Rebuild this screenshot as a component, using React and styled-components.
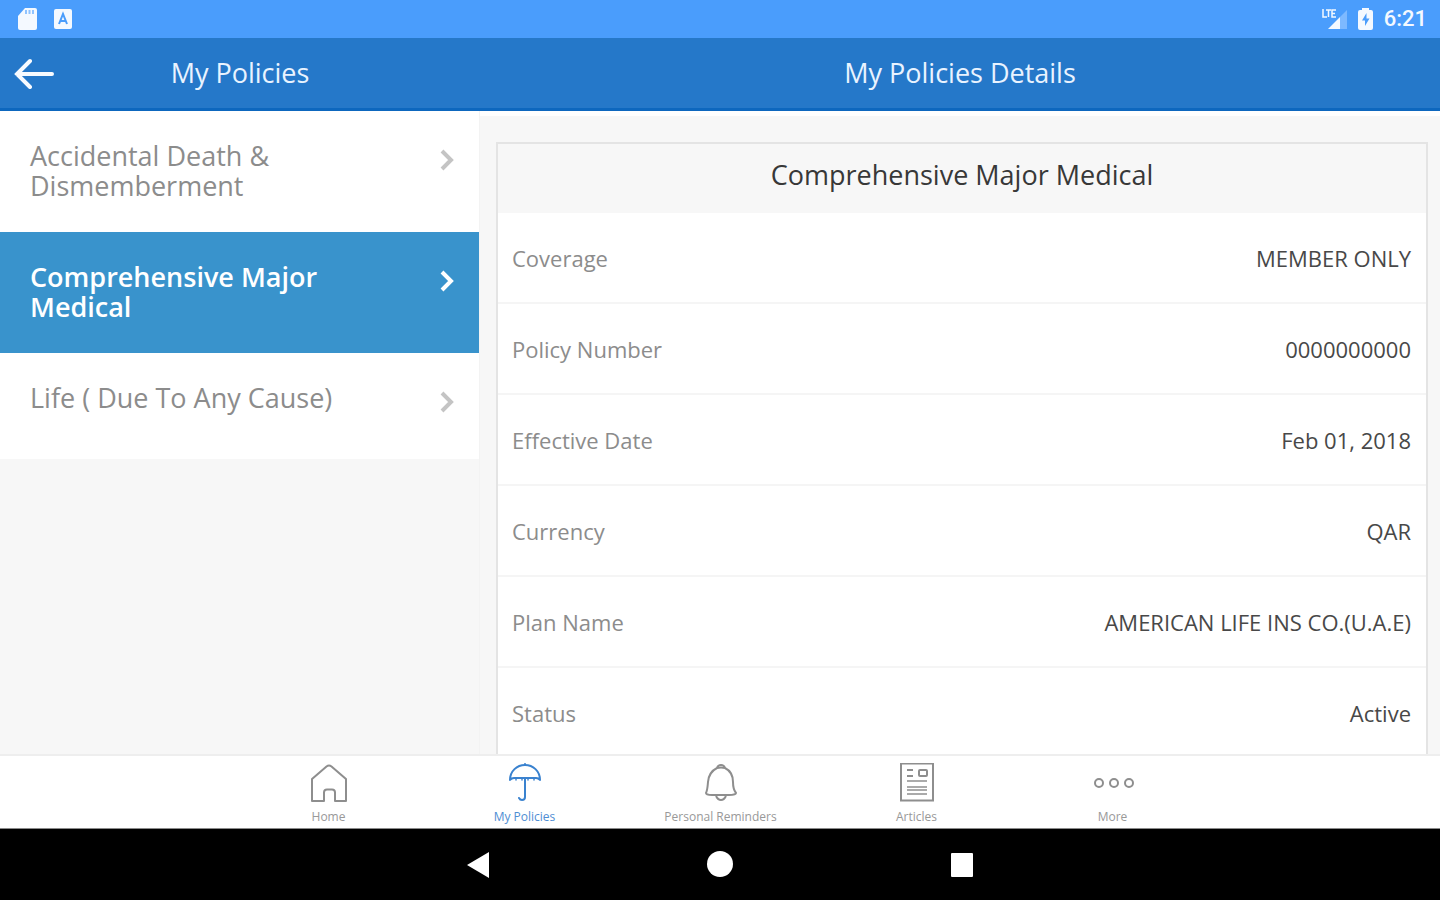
import React, { useState } from "react";
import styled, { createGlobalStyle } from "styled-components";

const GlobalStyle = createGlobalStyle`
  * {
    box-sizing: border-box;
  }
  body {
    margin: 0;
    font-family: "Open Sans", "Noto Sans", sans-serif;
    background: #f7f7f7;
  }
  button {
    font: inherit;
    border: 0;
    padding: 0;
    background: none;
    cursor: pointer;
  }
`;

const Screen = styled.div`
  display: flex;
  flex-direction: column;
  height: 100vh;
`;

const StatusBar = styled.div`
  display: flex;
  flex-shrink: 0;
  align-items: center;
  justify-content: space-between;
  height: 38px;
  padding: 0 13px 0 18px;
  background: #4a9dfc;
  color: #f4f9ff;
`;
const StatusGroup = styled.div`
  display: flex;
  align-items: center;
  gap: ${props => props.gap};
`;
const Clock = styled.span`
  font-family: Roboto, sans-serif;
  font-size: 22px;
  font-weight: 500;
  line-height: 38px;
`;

const Header = styled.header`
  display: grid;
  flex-shrink: 0;
  grid-template-columns: 1fr 2fr;
  height: 73px;
  background: #2578c9;
  border-bottom: 3px solid #0d67be;
  color: #e9f3ff;
`;
const HeaderPane = styled.div`
  display: flex;
  align-items: center;
`;
const BackButton = styled.button`
  display: flex;
  width: 70px;
  padding-left: 14px;
  color: #f8fbff;
`;
const HeaderTitle = styled.h1`
  flex: 1;
  margin: 0;
  padding-right: ${props => props.offset || 0};
  font-size: 27px;
  font-weight: 400;
  line-height: 36px;
  text-align: center;
`;

const Content = styled.main`
  display: grid;
  flex: 1;
  grid-template-columns: 1fr 2fr;
  min-height: 0;
  overflow: hidden;
`;
const Sidebar = styled.nav`
  display: flex;
  flex-direction: column;
  border-right: 1px solid #f3f3f3;
`;
const PolicyItem = styled.button`
  display: flex;
  align-items: flex-start;
  justify-content: space-between;
  min-height: 106px;
  padding: 30px 24px 31px 30px;
  background: ${props => props.$active ? '#3993cc' : '#ffffff'};
  color: ${props => props.$active ? '#ffffff' : '#8c8c8c'};
  font-size: 27px;
  font-weight: ${props => props.$active ? 600 : 400};
  line-height: 30px;
  text-align: left;
  svg {
    flex-shrink: 0;
    margin-top: 8px;
    color: ${props => props.$active ? '#ffffff' : '#c4c4c4'};
  }
`;
const PolicyName = styled.span`
  max-width: 320px;
`;

const Details = styled.section`
  padding: 26px 12px 0 16px;
  overflow: hidden;
  border-top: 5px solid #ffffff;
`;
const Card = styled.table`
  width: 100%;
  border: 2px solid #e4e4e4;
  border-spacing: 0;
  background: #ffffff;
`;
const CardTitle = styled.caption`
  height: 71px;
  border: 2px solid #e4e4e4;
  border-bottom: 0;
  background: #f7f7f7;
  color: #383838;
  font-size: 27px;
  line-height: 62px;
  margin-bottom: -2px;
`;
const Label = styled.th`
  height: 91px;
  padding: 0 14px;
  border-bottom: 2px solid #f5f5f5;
  color: #8c8c8c;
  font-size: 22px;
  font-weight: 400;
  text-align: left;
`;
const Value = styled.td`
  padding: 0 15px;
  border-bottom: 2px solid #f5f5f5;
  color: #484848;
  font-size: 22px;
  text-align: right;
`;

const TabBar = styled.nav`
  display: flex;
  flex-shrink: 0;
  justify-content: center;
  height: 75px;
  border-top: 2px solid #eeeeee;
  border-bottom: 1px solid #8a8a8a;
  background: #ffffff;
`;
const Tab = styled.button`
  display: flex;
  flex-direction: column;
  align-items: center;
  flex: 0 1 196px;
  padding: 7px 0 0 1px;
  color: ${props => props.$active ? '#3a82cf' : '#8e8e8e'};
  font-size: 12px;
  line-height: 18px;
  svg {
    height: 40px;
  }
`;
const TabLabel = styled.span`
  padding-top: 5px;
  opacity: 0.9;
`;

const SystemBar = styled.div`
  display: flex;
  flex-shrink: 0;
  justify-content: center;
  height: 71px;
  background: #000000;
`;
const SystemButton = styled.button`
  display: flex;
  align-items: center;
  justify-content: center;
  flex: 0 1 242px;
`;

const policies = [
  "Accidental Death & Dismemberment",
  "Comprehensive Major Medical",
  "Life ( Due To Any Cause)"
];

const details = [
  ["Coverage", "MEMBER ONLY"],
  ["Policy Number", "0000000000"],
  ["Effective Date", "Feb 01, 2018"],
  ["Currency", "QAR"],
  ["Plan Name", "AMERICAN LIFE INS CO.(U.A.E)"],
  ["Status", "Active"]
];

const Chevron = () => (
  <svg width="16" height="22" viewBox="0 0 16 22" fill="none" stroke="currentColor" strokeWidth="4">
    <path d="M3 2l9 9-9 9" />
  </svg>
);

const HomeIcon = () => (
  <svg width="40" viewBox="0 0 40 40" fill="none" stroke="currentColor" strokeWidth="2" strokeLinejoin="round">
    <path d="M3 16L17.500 3.500q2.500-2 5 0L37 16v22H26V29.500q0-3-3-3h-5q-3 0-3 3V38H3z" />
  </svg>
);

const UmbrellaIcon = () => (
  <svg width="40" viewBox="0 0 40 40" fill="none" stroke="currentColor" strokeWidth="2" strokeLinecap="round" strokeLinejoin="round">
    <path d="M5 17C5 8 12 2 20 2s15 6 15 15q-1.500-2-4-2H9q-2.500 0-4 2z" />
    <path d="M11 16.500v.5M17 16.500v.5M23 16.500v.5M29 16.500v.5" strokeWidth="1.500" />
    <path d="M20 1v1M20 15v19q0 3-3 3-2 0-3-2" />
  </svg>
);

const BellIcon = () => (
  <svg width="40" viewBox="0 0 40 40" fill="none" stroke="currentColor" strokeWidth="2" strokeLinejoin="round">
    <path d="M16 5q1-3 4-3t4 3c6 3 8 8 8 14 0 6 .5 8 3 11 0 1-3 2-7 2H11c-4 0-6-1-6-2 1.500-3 1.500-6 2-11 .5-6 3-11 9-14z" />
    <path d="M16 5q4-1 8 0M15 33q2 4 5 4t5-4" />
  </svg>
);

const ArticlesIcon = () => (
  <svg width="40" viewBox="0 0 40 40" fill="none" stroke="currentColor" strokeWidth="2">
    <path d="M4 0.500h32v37H4z" />
    <path d="M10 7h6M10 13h6" />
    <path d="M10 18h20M10 24h20M10 27h20M10 31h20" strokeWidth="1.500" />
    <rect x="22" y="7" width="8" height="6" rx="1" />
  </svg>
);

const MoreIcon = () => (
  <svg width="44" viewBox="0 0 44 40" fill="none" stroke="currentColor" strokeWidth="2">
    <circle cx="8" cy="20" r="4" />
    <circle cx="23" cy="20" r="4" />
    <circle cx="38" cy="20" r="4" />
  </svg>
);

const tabs = [
  { label: "Home", Icon: HomeIcon },
  { label: "My Policies", Icon: UmbrellaIcon },
  { label: "Personal Reminders", Icon: BellIcon },
  { label: "Articles", Icon: ArticlesIcon },
  { label: "More", Icon: MoreIcon }
];

function DeviceStatus() {
  return (
    <StatusBar>
      <StatusGroup gap="17px">
        <svg width="19" height="22" viewBox="0 0 19 22" fill="currentColor">
          <path d="M7 0h10q2 0 2 2v18q0 2-2 2H2q-2 0-2-2V8z" />
          <path d="M8 2v4M11.500 2v4M15 2v4" stroke="#8fc3ff" strokeWidth="2" />
        </svg>
        <svg width="18" height="20" viewBox="0 0 18 20">
          <rect width="18" height="20" rx="2" fill="currentColor" />
          <path d="M5 15l4-10 4 10M6.500 12h5" fill="none" stroke="#4a9dfc" strokeWidth="2" />
        </svg>
      </StatusGroup>
      <StatusGroup gap="11px">
        <svg width="27" height="22" viewBox="0 0 27 22" fill="none" stroke="currentColor">
          <path d="M3 1v8h4M6 2h5M8.500 2v7M16 2h-4v7h4M12 5.500h3" strokeWidth="1.500" />
          <path d="M20 9l7-7v19h-7z" fill="#7db9ff" stroke="none" />
          <path d="M8 21L20 9v12z" fill="currentColor" stroke="none" />
        </svg>
        <svg width="15" height="22" viewBox="0 0 15 22">
          <path d="M4 2V0h7v2h2q2 0 2 2v16q0 2-2 2H2q-2 0-2-2V4q0-2 2-2z" fill="currentColor" />
          <path d="M8.500 5L4 12.500h3V18l4.500-7.500h-3z" fill="#4a9dfc" />
        </svg>
        <Clock>6:21</Clock>
      </StatusGroup>
    </StatusBar>
  );
}

function PolicyDetails(props) {
  return (
    <Details>
      <Card>
        <CardTitle>{props.title}</CardTitle>
        <tbody>
          {details.map(([label, value]) => (
            <tr key={label}>
              <Label scope="row">{label}</Label>
              <Value>{value}</Value>
            </tr>
          ))}
        </tbody>
      </Card>
    </Details>
  );
}

function App() {
  const [policy, setPolicy] = useState(policies[1]);
  const [tab, setTab] = useState("My Policies");
  return (
    <Screen>
      <GlobalStyle />
      <DeviceStatus />
      <Header>
        <HeaderPane>
          <BackButton aria-label="Back">
            <svg width="41" height="32" viewBox="0 0 41 32" fill="none" stroke="currentColor" strokeWidth="4" strokeLinecap="round">
              <path d="M3 17h35M16 4L3 17l13 13" />
            </svg>
          </BackButton>
          <HeaderTitle offset="70px">My Policies</HeaderTitle>
        </HeaderPane>
        <HeaderPane>
          <HeaderTitle>My Policies Details</HeaderTitle>
        </HeaderPane>
      </Header>
      <Content>
        <Sidebar>
          {policies.map(name => (
            <PolicyItem key={name} $active={name === policy} onClick={() => setPolicy(name)}>
              <PolicyName>{name}</PolicyName>
              <Chevron />
            </PolicyItem>
          ))}
        </Sidebar>
        <PolicyDetails title={policy} />
      </Content>
      <TabBar>
        {tabs.map(({ label, Icon }) => (
          <Tab key={label} $active={label === tab} onClick={() => setTab(label)}>
            <Icon />
            <TabLabel>{label}</TabLabel>
          </Tab>
        ))}
      </TabBar>
      <SystemBar>
        <SystemButton aria-label="System back">
          <svg width="24" height="28" viewBox="0 0 24 28" fill="#ffffff">
            <path d="M1 14L23 1v26z" />
          </svg>
        </SystemButton>
        <SystemButton aria-label="System home">
          <svg width="26" height="28" viewBox="0 0 26 28" fill="#ffffff">
            <circle cx="13" cy="13" r="13" />
          </svg>
        </SystemButton>
        <SystemButton aria-label="Recent apps">
          <svg width="24" height="26" viewBox="0 0 24 26" fill="#ffffff">
            <rect x="1" y="1" width="22" height="24" rx="1" />
          </svg>
        </SystemButton>
      </SystemBar>
    </Screen>
  );
}

export default App;
